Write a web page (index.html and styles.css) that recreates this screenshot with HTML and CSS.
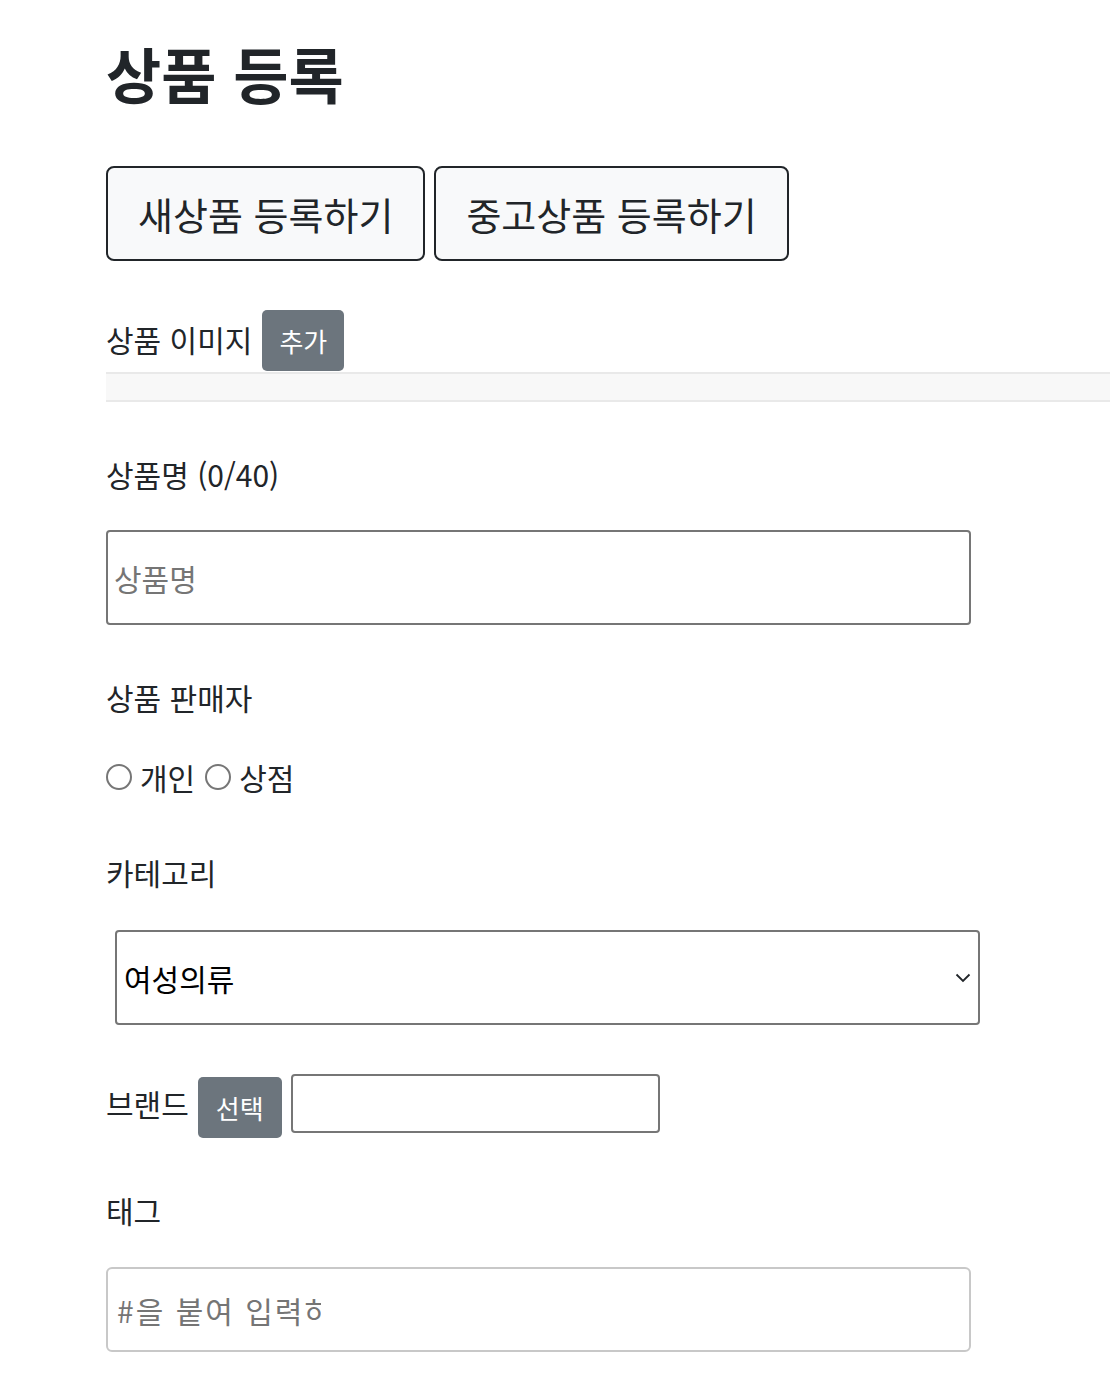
FILE: index.html
```html
<!DOCTYPE html>
<html lang="ko">
<head>
<meta charset="utf-8">
<title>상품 등록</title>
<link rel="stylesheet" href="styles.css">
</head>
<body>
<div class="page">
  <h1 class="title">상품 등록</h1>
  <div class="type-row">
    <button class="type-btn">새상품 등록하기</button>
    <button class="type-btn">중고상품 등록하기</button>
  </div>

  <div class="image-row">
    <span class="label-inline">상품 이미지</span>
    <button class="gray-btn">추가</button>
  </div>
  <div class="image-strip"></div>

  <div class="group">
    <div class="label">상품명 (0/40)</div>
    <input class="text-input" type="text" placeholder="상품명">
  </div>

  <div class="group">
    <div class="label">상품 판매자</div>
    <div class="radio-row">
      <label class="radio-item"><input type="radio" name="seller" class="radio"><span>개인</span></label>
      <label class="radio-item"><input type="radio" name="seller" class="radio"><span>상점</span></label>
    </div>
  </div>

  <div class="group group-cat">
    <div class="label">카테고리</div>
    <div class="select-wrap">
      <select class="select">
        <option>여성의류</option>
      </select>
      <svg class="chevron" width="16" height="10" viewBox="0 0 16 10"><path d="M1.5 1.5 L8 8 L14.5 1.5" fill="none" stroke="#212529" stroke-width="1.8"/></svg>
    </div>
  </div>

  <div class="brand-row">
    <span class="label-inline">브랜드</span>
    <button class="gray-btn brand-btn">선택</button>
    <input class="brand-input" type="text">
  </div>

  <div class="group">
    <div class="label">태그</div>
    <div class="tag-box">
      <input class="tag-input" type="text" placeholder="#을 붙여 입력하세요">
    </div>
  </div>
</div>
</body>
</html>
```

FILE: styles.css
```css
* { box-sizing: border-box; }

html, body {
  margin: 0;
  padding: 0;
  background: #ffffff;
  overflow-x: hidden;
}

body {
  font-family: "Noto Sans CJK KR", "Noto Sans", sans-serif;
  color: #212529;
}

.page {
  padding: 38px 0 40px 106px;
}

.title {
  margin: 0;
  font-size: 60px;
  line-height: 70px;
  height: 70px;
  font-weight: 700;
  color: #212529;
}

.type-row {
  display: flex;
  gap: 9px;
  margin-top: 58px;
}

.type-btn {
  height: 95px;
  padding: 0 30px;
  font-family: inherit;
  font-size: 38px;
  color: #212529;
  background: #f8f9fa;
  border: 2px solid #212529;
  border-radius: 8px;
}

.image-row {
  display: flex;
  align-items: center;
  gap: 10px;
  margin-top: 49px;
  height: 61px;
}

.label-inline {
  font-size: 30px;
  line-height: 42px;
  margin-top: -4px;
}

.gray-btn {
  height: 61px;
  padding: 0 17px;
  font-family: inherit;
  font-size: 26px;
  color: #ffffff;
  background: #6c757d;
  border: none;
  border-radius: 5px;
}

.image-strip {
  margin-top: 1px;
  height: 30px;
  background: #f8f8f8;
  border-top: 2px solid #e9e9e9;
  border-bottom: 2px solid #e9e9e9;
}

.group {
  display: flex;
  flex-direction: column;
  align-items: flex-start;
  margin-top: 51px;
}

.group-cat {
  margin-top: 53px;
}

.label {
  font-size: 30px;
  line-height: 42px;
  height: 42px;
  margin-bottom: 35px;
}

.text-input {
  display: block;
  width: 865px;
  height: 95px;
  padding: 0 6px;
  font-family: inherit;
  font-size: 30px;
  color: #212529;
  border: 2px solid #767676;
  border-radius: 4px;
  outline: none;
}

.text-input::placeholder,
.tag-input::placeholder {
  color: #757575;
}

.radio-row {
  display: flex;
  align-items: center;
  gap: 10px;
  height: 42px;
  margin-top: 3px;
}

.radio-item {
  display: flex;
  align-items: center;
  gap: 8px;
  font-size: 30px;
  line-height: 42px;
}

.radio {
  -webkit-appearance: none;
  appearance: none;
  width: 26px;
  height: 26px;
  margin: 0;
  border: 2px solid #767676;
  border-radius: 50%;
  background: #ffffff;
}

.select-wrap {
  position: relative;
  width: 865px;
  margin-left: 9px;
  margin-top: 2px;
}

.select {
  -webkit-appearance: none;
  appearance: none;
  display: block;
  width: 865px;
  height: 95px;
  padding: 0 7px;
  font-family: inherit;
  font-size: 30px;
  color: #000000;
  background: #ffffff;
  border: 2px solid #767676;
  border-radius: 4px;
  outline: none;
}

.chevron {
  position: absolute;
  right: 9px;
  top: 43px;
}

.brand-row {
  display: flex;
  align-items: flex-start;
  gap: 9px;
  margin-top: 49px;
}

.brand-row .label-inline {
  margin-top: 8px;
}

.brand-btn {
  margin-top: 3px;
  padding: 0 18px;
}

.brand-input {
  width: 369px;
  height: 59px;
  border: 2px solid #767676;
  border-radius: 4px;
  outline: none;
  font-family: inherit;
  font-size: 28px;
}

.tag-box {
  width: 865px;
  height: 85px;
  border: 2px solid #c8c8c8;
  border-radius: 6px;
  display: flex;
  align-items: center;
  padding-left: 9px;
  margin-top: 1px;
}

.tag-input {
  width: 204px;
  padding: 0;
  border: none;
  outline: none;
  font-family: inherit;
  font-size: 30px;
  letter-spacing: 2px;
  color: #212529;
  background: transparent;
}
```
